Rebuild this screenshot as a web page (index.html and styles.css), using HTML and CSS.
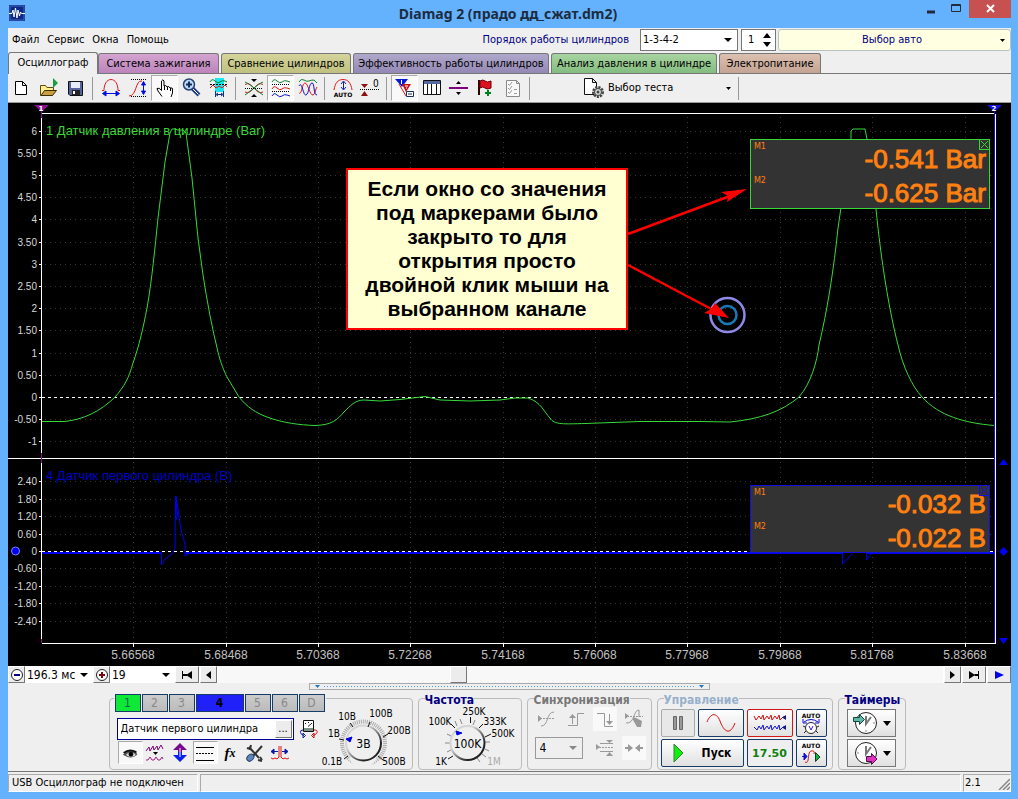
FILE: index.html
```html
<!DOCTYPE html>
<html lang="ru">
<head>
<meta charset="utf-8">
<title>Diamag 2 (прадо дд_сжат.dm2)</title>
<meta name="viewport" content="width=device-width, initial-scale=1">
<link rel="stylesheet" href="styles.css">
</head>
<body>
<header class="titlebar">
  <svg class="app-icon" viewBox="0 0 16 16" width="16" height="16"><rect width="16" height="16" fill="#0b2a8a"/><rect x="1" y="1" width="14" height="14" fill="none" stroke="#4767c0"/><path d="M0 8.500H3L4 5L5 12L6.500 3L8 13L9 5L10.500 11L11.500 7L12.500 8.500H16" fill="none" stroke="#fff"/></svg>
  <h1 class="title">Diamag 2 (прадо дд_сжат.dm2)</h1>
  <div class="window-buttons">
    <button class="win-btn" aria-label="Свернуть"><svg viewBox="0 0 16 16" width="16" height="16"><path d="M3 11H11" stroke="#222b38" stroke-width="3"/></svg></button>
    <button class="win-btn" aria-label="Развернуть"><svg viewBox="0 0 16 16" width="16" height="16"><path d="M2.500 3.500H11.500V10.500H2.500ZM2 4.500H12" fill="none" stroke="#222b38"/></svg></button>
    <button class="win-btn win-close" aria-label="Закрыть"><svg viewBox="0 0 16 16" width="16" height="16"><path d="M5 4L12 11M12 4L5 11" stroke="#fff" stroke-width="2"/></svg></button>
  </div>
</header>
<main class="client">
  <div class="menurow">
    <nav class="menu">
      <button>Файл</button><button>Сервис</button><button>Окна</button><button>Помощь</button>
    </nav>
    <label class="order-label" for="order">Порядок работы цилиндров</label>
    <select id="order" class="order"><option>1-3-4-2</option></select>
    <div class="spinner">
      <input class="spin-input" aria-label="Цилиндр" value="1">
      <span class="spin-arrows"><button aria-label="Больше"><svg viewBox="0 0 8 5" width="8" height="5"><path d="M0 5L4 0L8 5Z"/></svg></button><button aria-label="Меньше"><svg viewBox="0 0 8 5" width="8" height="5"><path d="M0 0L4 5L8 0Z"/></svg></button></span>
    </div>
    <button class="car"><span>Выбор авто</span><svg viewBox="0 0 5 3" width="5" height="3"><path d="M0 0H5L2.500 3Z"/></svg></button>
  </div>
  <div class="tabs" role="tablist">
    <button class="tab tab-active" role="tab">Осциллограф</button>
    <button class="tab tab-pink" role="tab">Система зажигания</button>
    <button class="tab tab-olive" role="tab">Сравнение цилиндров</button>
    <button class="tab tab-violet" role="tab">Эффективность работы цилиндров</button>
    <button class="tab tab-green" role="tab">Анализ давления в цилиндре</button>
    <button class="tab tab-brown" role="tab">Электропитание</button>
  </div>
  <div class="toolbar">
    <button class="tool" aria-label="Новый"><svg viewBox="0 0 20 20" width="20" height="20"><path d="M3.500 3.500H10.500L14.500 7.500V16.500H3.500ZM10.500 3.500V7.500H14.500" fill="#fff" stroke="#000"/></svg></button>
    <button class="tool" aria-label="Открыть"><svg viewBox="0 0 20 20" width="20" height="20"><path d="M1.500 17.500V7.500H6.500L8 9.500H14.500V12.500L13.500 17.500Z" fill="#ffef90" stroke="#5a4a10"/><path d="M2 17.500L5.500 12.500H17.500L13.500 17.500Z" fill="#c9a040" stroke="#3c2c00"/><path d="M14 0V10L19 5Z" fill="#1aa03c"/></svg></button>
    <button class="tool" aria-label="Сохранить"><svg viewBox="0 0 20 20" width="20" height="20"><path d="M2.500 3.500H16.500V17.500H4L2.500 16Z" fill="#56639c" stroke="#111"/><rect x="5" y="4" width="9" height="6" fill="#e8ecf4"/><rect x="6" y="12" width="8" height="5" fill="#222"/><rect x="7" y="13" width="2" height="3" fill="#fff"/></svg></button>
    <span class="sep"></span>
    <button class="tool" aria-label="Развёртка"><svg viewBox="0 0 20 20" width="20" height="20"><path d="M1 12.500H3C3 6 6 1.500 10 1.500S17 6 17 12.500H19" fill="none" stroke="#e01818"/><path d="M3 15.500H17M5 13V18L1.500 15.500ZM15 13V18L18.500 15.500Z" fill="#0010e0" stroke="#0010e0"/></svg></button>
    <button class="tool" aria-label="Амплитуда"><svg viewBox="0 0 20 20" width="20" height="20"><path d="M1 18C9 18 7 2 14 3" fill="none" stroke="#e01818"/><path d="M3 1.500H19M3 18.500H19" stroke="#000" stroke-dasharray="1 1"/><path d="M15.500 4V16M13.500 7L15.500 3.500L17.500 7ZM13.500 13L15.500 16.500L17.500 13Z" fill="#0010e0" stroke="#0010e0"/></svg></button>
    <button class="tool pressed" aria-label="Рука"><svg viewBox="0 0 20 20" width="20" height="20"><path d="M7 18.500L3 13L2 10.500Q4 9 6.500 12.500V3Q8 .500 9 3V8Q11 6.500 12 9Q14 7.500 15 10Q18 9 17.500 12V15L16 19" fill="#fff" stroke="#000"/><path d="M9.500 8V12M12.500 9V12M15.500 10V13" stroke="#000"/></svg></button>
    <button class="tool" aria-label="Лупа"><svg viewBox="0 0 20 20" width="20" height="20"><path d="M10 10L17 17" stroke="#223e80" stroke-width="4"/><path d="M11 11L16.500 16.500" stroke="#fff"/><circle cx="7" cy="6.500" r="5.500" fill="#b8dcff" stroke="#28406c" stroke-width="1.500"/><path d="M4 6.500H10M7 3.500V9.500" stroke="#142850" stroke-width="2"/></svg></button>
    <button class="tool" aria-label="Участок"><svg viewBox="0 0 20 20" width="20" height="20"><rect x="6" y="0" width="9" height="14" fill="#18e8f0"/><path d="M1 4Q3 0 6 3T11 4T16 3L18 4" fill="none" stroke="#088030"/><path d="M1 10L4 7L7 10L10 8L13 10L16 7L18 9" fill="none" stroke="#e01818"/><path d="M1 6.500H19" stroke="#000" stroke-dasharray="2 1"/><path d="M6.500 13V19M14.500 13V19M8 16.500H13M9 15L7 16.500L9 18M12 15L14 16.500L12 18" fill="none" stroke="#123080"/></svg></button>
    <span class="sep"></span>
    <button class="tool" aria-label="Наложение"><svg viewBox="0 0 20 20" width="20" height="20"><path d="M1 6.500C8 2 12 18 19 14M1 14C8 18 12 2 19 6.500" fill="none" stroke="#e01818"/><path d="M1 4L5 6L10 10L15 6L19 4M1 17L5 14L10 10L15 14L19 17" fill="none" stroke="#108030"/><path d="M1 10.500H19" stroke="#000" stroke-dasharray="1 1"/><path d="M7 1H13L10 4ZM7 19H13L10 16Z"/></svg></button>
    <button class="tool pressed" aria-label="Каналы отдельно"><svg viewBox="0 0 20 20" width="20" height="20"><g fill="none"><path d="M1 4Q3 0 6 3T11 4T16 3L19 4" stroke="#108030"/><path d="M1 11Q3 7 6 10T11 11T16 10L19 11" stroke="#e01818"/><path d="M1 18Q3 14 6 17T11 18T16 17L19 18" stroke="#1010d0"/><path d="M1 6.500H19M1 13.500H19" stroke="#000" stroke-dasharray="1 1"/></g></svg></button>
    <button class="tool" aria-label="Каналы вместе"><svg viewBox="0 0 20 20" width="20" height="20"><g fill="none"><path d="M1 4Q3 0 6 2T11 3T16 2L19 5" stroke="#108030"/><path d="M1 15C4 17 4 5 7 5S12 18 15 17S17 11 19 9" stroke="#e01818"/><path d="M1 8C4 2 5 18 8 17S11 5 14 5S15 17 19 17" stroke="#1010d0"/></g></svg></button>
    <span class="sep"></span>
    <button class="tool" aria-label="Авто"><svg viewBox="0 0 24 20" width="24" height="20"><path d="M3 12C4 5 7 1.500 12 1.500S20 5 21 12" fill="none" stroke="#e01818"/><path d="M12.500 4V11M10 6L12.500 3L15 6M10 9L12.500 12L15 9" fill="none" stroke="#1020b0"/><text class="auto" x="12" y="19">AUTO</text></svg></button>
    <button class="tool" aria-label="Ноль"><svg viewBox="0 0 20 20" width="20" height="20"><path d="M1 6H8L4.500 10ZM1 18H8L4.500 13Z" fill="#8c1010"/><path d="M0 11.500H19" stroke="#000" stroke-dasharray="1 1"/><text x="13" y="9" font-size="10">0</text></svg></button>
    <span class="sep"></span>
    <button class="tool pressed" aria-label="Маркеры"><svg viewBox="0 0 20 20" width="20" height="20"><path d="M0 1H13L7 9Z" fill="#0818d8"/><path d="M6.500 2V6" stroke="#fff"/><path d="M7 6H16L11 14Z" fill="#c81018"/><path d="M4 6L11 18M12 8V11" stroke="#e01818"/><path d="M10 8H13M11 10H12" stroke="#fff"/><path d="M11.500 13.500H18.500V18.500H11.500Z" fill="#fff" stroke="#1c3060"/><path d="M13 16H17" stroke="#1c3060"/></svg></button>
    <button class="tool" aria-label="Таблица"><svg viewBox="0 0 20 20" width="20" height="20"><path d="M1.500 2.500H18.500V16.500H1.500ZM5.500 6V16M9.500 6V16M14.500 6V16" fill="#fff" stroke="#111"/><path d="M2 4.500H18" stroke="#5568a0" stroke-width="3"/></svg></button>
    <button class="tool" aria-label="Линия"><svg viewBox="0 0 20 20" width="20" height="20"><path d="M0 10H19" stroke="#800080" stroke-width="2"/><path d="M7 6H12L9.500 3ZM7 14H12L9.500 17Z"/></svg></button>
    <button class="tool" aria-label="Флажок"><svg viewBox="0 0 20 20" width="20" height="20"><path d="M3 2V17" stroke="#300" stroke-width="2"/><path d="M4 3Q7 1 9 3T15 3V10Q11 12 9 10T4 10Z" fill="#e01020" stroke="#600"/><path d="M9 15H15M12 12V18" stroke="#008020" stroke-width="2"/></svg></button>
    <button class="tool" aria-label="Список"><svg viewBox="0 0 20 20" width="20" height="20"><path d="M3.500 2.500H13.500L16.500 5.500V18.500H3.500ZM13.500 2.500V5.500H16.500" fill="#f8f8f8" stroke="#888"/><path d="M5 6L6.500 7.500L9 4M5 10L6.500 11.500L9 8M5 14L6.500 15.500L9 12M11 15.500H14M11 11.500H14" fill="none" stroke="#999"/></svg></button>
    <span class="sep"></span>
    <button class="test-select"><svg viewBox="0 0 20 20" width="20" height="20"><path d="M.500 .500H8.500L12.500 4.500V16.500H.500ZM8.500 .500V4.500H12.500" fill="#fff" stroke="#111"/><circle cx="14" cy="14" r="4.500" fill="#d8e0dc" stroke="#444" stroke-width="3" stroke-dasharray="2 1"/><circle cx="14" cy="14" r="3.500" fill="#d8e0dc" stroke="#444"/><circle cx="14" cy="14" r="1.500" fill="#444"/></svg><span>Выбор теста</span><svg class="drop" viewBox="0 0 5 3" width="5" height="3"><path d="M0 0H5L2.500 3Z"/></svg></button>
    <span class="sep"></span>
  </div>
  <section class="scope" aria-label="Осциллограмма">
    <svg class="plot" viewBox="8 103 1003 563">
      <g class="grid">
        <path d="M45 131.500H994M45 153.500H994M45 175.500H994M45 197.500H994M45 219.500H994M45 242.500H994M45 264.500H994M45 286.500H994M45 308.500H994M45 330.500H994M45 353.500H994M45 375.500H994M45 419.500H994M45 441.500H994"/>
        <path d="M45 481.500H994M45 499.500H994M45 516.500H994M45 534.500H994M45 568.500H994M45 586.500H994M45 603.500H994M45 621.500H994"/>
        <path d="M133.500 117V643M226.500 117V643M318.500 117V643M410.500 117V643M503.500 117V643M595.500 117V643M687.500 117V643M780.500 117V643M872.500 117V643M965.500 117V643"/>
      </g>
      <path class="trace-blue base" d="M42 553H161M185 553H842M866 553H994"/>
      <path class="trace-blue" d="M161.500 553V565L165 559L173 553L175 548L175.500 496L177.500 515L176 520V496L181 530L185 544V556L190 553M842.500 553V564L852 554M866.500 553V560L872 553"/>
      <g class="axis">
        <path d="M41.500 113.500H994M8 458.500H995M41.500 643.500H996M41.500 118V643"/>
        <path d="M39 131.500H42M39 153.500H42M39 175.500H42M39 197.500H42M39 219.500H42M39 242.500H42M39 264.500H42M39 286.500H42M39 308.500H42M39 330.500H42M39 353.500H42M39 375.500H42M39 397.500H42M39 419.500H42M39 441.500H42M39 481.500H42M39 499.500H42M39 516.500H42M39 534.500H42M39 551.500H42M39 568.500H42M39 586.500H42M39 603.500H42M39 621.500H42"/>
        <path d="M133.500 643V647M226.500 643V647M318.500 643V647M410.500 643V647M503.500 643V647M595.500 643V647M687.500 643V647M780.500 643V647M872.500 643V647M965.500 643V647"/>
        <path class="zero" d="M42 397.500H994M42 551.500H994"/>
      </g>
      <path class="trace-green" d="M42 421.500H64C83 420 101 411 115 397C124 387 129 378 133 363C139 346 143 329 147 308C152 280 155 247 158 218L165 162L170 133L172 129H175L178 130H183L186 133L192 178L198 238L203 275C207 301 212 328 218 352C221 364 224 371 227 377L239 397C247 407 256 413 267 417C283 423 300 425 315 425.500C332 425 337 420 344 412C350 406 355 400 364 400L380 401L400 399.500L425 396.500L440 400L470 401L500 400L515 398L528 398C541 402 544 412 550 418C554 425 564 424 585 423.500L640 421.500L700 421.500L730 422C760 419 781 412 799 397C811 383 817 362 819 345C827 312 834 268 838 228L851 139V131L853 129H865L867 139L876 209C881 260 889 310 898 345C903 367 912 386 922 397C939 416 965 423 994 425.500"/>
      <g class="ylabels">
        <text x="37" y="135">6</text><text x="37" y="157">5.50</text><text x="37" y="179">5</text><text x="37" y="201">4.50</text><text x="37" y="223">4</text><text x="37" y="246">3.50</text><text x="37" y="268">3</text><text x="37" y="290">2.50</text><text x="37" y="312">2</text><text x="37" y="334">1.50</text><text x="37" y="357">1</text><text x="37" y="379">0.50</text><text x="37" y="401">0</text><text x="37" y="423">-0.50</text><text x="37" y="445">-1</text>
        <text x="37" y="485">2.40</text><text x="37" y="503">1.80</text><text x="37" y="520">1.20</text><text x="37" y="538">0.60</text><text x="37" y="555">0</text><text x="37" y="572">-0.60</text><text x="37" y="590">-1.20</text><text x="37" y="607">-1.80</text><text x="37" y="625">-2.40</text>
      </g>
      <g class="xlabels">
        <text x="133" y="659">5.66568</text><text x="226" y="659">5.68468</text><text x="318" y="659">5.70368</text><text x="410" y="659">5.72268</text><text x="503" y="659">5.74168</text><text x="595" y="659">5.76068</text><text x="687" y="659">5.77968</text><text x="780" y="659">5.79868</text><text x="872" y="659">5.81768</text><text x="965" y="659">5.83668</text>
      </g>
      <text class="name-green" x="46" y="135">1 Датчик давления в цилиндре (Bar)</text>
      <text class="name-blue" x="46" y="480">4 Датчик первого цилиндра (В)</text>
      <path d="M34 105H49L41.500 112ZM41 112H42V118H41ZM41 453H42V463H41ZM41 639H42V643H41Z" fill="#8a1090"/>
      <path d="M987 105H1002L994.500 112Z" fill="#1010e0"/>
      <text class="marker" x="41" y="111">1</text><text class="marker" x="994" y="111">2</text>
      <path d="M994.500 112V643" stroke="#1010e0"/><path d="M995.500 114V643" stroke="#fff"/>
      <circle cx="15.500" cy="551" r="4" fill="#0000f0" stroke="#8080ff"/>
      <path d="M999 465L1003.500 459L1008 465ZM999 638L1003.500 644L1008 638ZM999 551.500L1003.500 547L1008 551.500L1003.500 556Z" fill="#0000f0"/>
      <circle cx="727.500" cy="315" r="17" fill="none" stroke="#8f8ae8" stroke-width="2.500"/><circle cx="727.500" cy="315" r="9" fill="none" stroke="#187ab8" stroke-width="2.500"/>
      <path d="M628 234L730 196M628 265L713 310" stroke="#f00" stroke-width="2.500"/>
      <path d="M747 189L727 202L728 196L721 192ZM729 318L704 313L711 309L715 303Z" fill="#f00"/>
    </svg>
    <div class="callout">Если окно со значения<br>под маркерами было<br>закрыто то для<br>открытия просто<br>двойной клик мыши на<br>выбранном канале</div>
    <div class="readout readout-green">
      <div class="reading"><small>M1</small><output>-0.541 Bar</output></div>
      <div class="reading"><small>M2</small><output>-0.625 Bar</output></div>
      <button class="readout-close" aria-label="Закрыть"><svg viewBox="0 0 9 9" width="9" height="9"><path d="M1 1L8 8M8 1L1 8" stroke="currentColor"/></svg></button>
    </div>
    <div class="readout readout-blue">
      <div class="reading"><small>M1</small><output>-0.032 В</output></div>
      <div class="reading"><small>M2</small><output>-0.022 В</output></div>
      <button class="readout-close" aria-label="Закрыть"><svg viewBox="0 0 9 9" width="9" height="9"><path d="M1 1L8 8M8 1L1 8" stroke="currentColor"/></svg></button>
    </div>
  </section>
  <div class="timebar">
    <button class="raised" aria-label="Уменьшить"><svg viewBox="0 0 14 14" width="14" height="14"><circle cx="7" cy="7" r="5.500" fill="#fff" stroke="#222"/><path d="M4 7H10" stroke="#000080" stroke-width="2"/></svg></button>
    <select class="span-select" aria-label="Развёртка"><option>196.3 мс</option></select>
    <button class="raised" aria-label="Увеличить"><svg viewBox="0 0 14 14" width="14" height="14"><circle cx="7" cy="7" r="5.500" fill="#fff" stroke="#222"/><path d="M4 7H10M7 4V10" stroke="#800010" stroke-width="2"/></svg></button>
    <select class="zoom-select" aria-label="Масштаб"><option>19</option></select>
    <button class="raised wide" aria-label="В начало"><svg viewBox="0 0 12 8" width="12" height="8"><path d="M1 0H2V8H1ZM11 0V8L5 4ZM2 3H6V5H2Z"/></svg></button>
    <button class="raised" aria-label="Назад"><svg viewBox="0 0 5 8" width="5" height="8"><path d="M5 0V8L0 4Z"/></svg></button>
    <div class="track"><span class="thumb"></span></div>
    <button class="raised" aria-label="Вперёд"><svg viewBox="0 0 5 8" width="5" height="8"><path d="M0 0V8L5 4Z"/></svg></button>
    <button class="raised wide" aria-label="В конец"><svg viewBox="0 0 12 8" width="12" height="8"><path d="M10 0H11V8H10ZM1 0V8L7 4ZM6 3H10V5H6Z"/></svg></button>
    <button class="raised wide" aria-label="Воспроизвести"><svg viewBox="0 0 9 8" width="9" height="8"><path d="M0 0V8L9 4Z" fill="#0000f0"/></svg></button>
  </div>
  <div class="splitter"><svg viewBox="0 0 5 3" width="5" height="3"><path d="M0 0H5L2.500 3Z"/></svg><i></i><svg viewBox="0 0 5 3" width="5" height="3"><path d="M0 0H5L2.500 3Z"/></svg></div>
  <div class="panels">
    <section class="group channel-group">
      <div class="channel-left">
        <div class="channels"><button class="ch ch-green">1</button><button class="ch">2</button><button class="ch">3</button><button class="ch ch-blue">4</button><button class="ch">5</button><button class="ch">6</button><button class="ch">D</button></div>
        <div class="sensor-row">
          <div class="sensor"><input aria-label="Датчик" value="Датчик первого цилиндра"><button class="raised" aria-label="Выбрать датчик">...</button></div>
          <button class="flat" aria-label="Прибор"><svg viewBox="0 0 20 22" width="20" height="22"><path d="M4.500 2.500H14.500V13.500H4.500Z" fill="#fff" stroke="#111"/><path d="M5 10H14V13H5Z" fill="#7a9080"/><path d="M6 5.500H7M9 4.500H10M12 5.500H13M9 8.500L12 6" fill="none" stroke="#222"/><path d="M4 12Q1 12 1.500 14.500T5 17.500M4 15L6.500 17.500L4 20Z" fill="none" stroke="#0818a0"/><path d="M15 12Q19 12 18 14.500T14 17.500M15 15L12.500 17.500L15 20Z" fill="none" stroke="#d81010"/></svg></button>
        </div>
        <div class="channel-tools">
          <button class="tool pressed" aria-label="Показать"><svg viewBox="0 0 20 20" width="18" height="18"><path d="M3 11Q9 5 17 9L18 12Q12 17 6 14L2 12Z" fill="#555"/><ellipse cx="11" cy="12" rx="5" ry="2" fill="#ddd"/><circle cx="11" cy="11.500" r="2.500"/><path d="M3 10Q9 5 17 9" fill="none" stroke="#111" stroke-width="2"/></svg></button>
          <button class="tool" aria-label="Фильтр"><svg viewBox="0 0 20 20" width="20" height="20"><path d="M1 8L4 4L5 8L8 3L9 7L12 3L13 7L16 2L18 6" fill="none" stroke="#800080"/><path d="M8 9H13L10.500 12Z"/><path d="M1 17H3L5 14L7 17H9L11 14L13 17H15L17 14L18 16" fill="none" stroke="#a02080"/></svg></button>
          <button class="tool" aria-label="Сдвиг"><svg viewBox="0 0 20 20" width="20" height="20"><path d="M10 0L17 7H12V9H8V7H3Z" fill="#780890"/><path d="M10 19L17 12H12V9H8V12H3Z" fill="#0820f0"/><path d="M10 5V14" stroke="#fff"/></svg></button>
          <button class="tool pressed" aria-label="Линии"><svg viewBox="0 0 20 20" width="20" height="20"><path d="M1 4.500H19M1 17.500H19" stroke="#000"/><path d="M1 10.500H19" stroke="#000" stroke-dasharray="2 1"/></svg></button>
          <button class="tool fx" aria-label="Функция">f<small>x</small></button>
          <button class="tool" aria-label="Настройки"><svg viewBox="0 0 20 20" width="20" height="20"><path d="M4 4L14 15" stroke="#333" stroke-width="2"/><path d="M17 3L8 13" stroke="#333" stroke-width="2"/><path d="M2 5L5 6L6 2M13 17L17 18M15 14L17 17" fill="none" stroke="#333" stroke-width="2"/><ellipse cx="5.500" cy="15" rx="4" ry="3" transform="rotate(-45 5 15)" fill="#5f86b8" stroke="#29456c"/></svg></button>
          <button class="tool" aria-label="Синхроимпульс"><svg viewBox="0 0 20 20" width="20" height="20"><path d="M1 15L3 16L5 15L7 16L9 14V3M11 3V14L13 16L15 15L17 16L19 15" fill="none" stroke="#e01010"/><path d="M4 6V11L1 8.500ZM15 6V11L18 8.500ZM4 8.500H8M12 8.500H15" fill="#0818a0" stroke="#0818a0"/></svg></button>
        </div>
      </div>
      <svg class="dial" viewBox="320 702 92 68" width="92" height="68">
        <defs><linearGradient id="rim" x1="0" y1="0" x2="1" y2="1"><stop offset=".35" stop-color="#d4d4d4"/><stop offset=".75" stop-color="#222"/></linearGradient></defs>
        <circle cx="363.500" cy="743" r="21.500" fill="none" stroke="#aaa" stroke-width="4" stroke-dasharray="1 1"/><path d="M349 759L363 746L377 759L369 768H356Z" fill="#efefef"/>
        <circle cx="363.500" cy="743" r="17.500" fill="#efefef" stroke="url(#rim)" stroke-width="2"/>
        <path d="M344 759L348 756M339 739L344 740M350 723L353 727M370 722L368 727M388 734L383 737M378 756L383 760" stroke="#111"/>
        <path d="M346 739L352 737L350 742Z" fill="#0000e0" stroke="#0000e0"/>
        <text x="363.500" y="748" class="dial-value">3В</text>
        <text x="347" y="720">10В</text><text x="381" y="717">100В</text><text x="334" y="737">1В</text><text x="399" y="734">200В</text><text x="332" y="765">0.1В</text><text x="394" y="765">500В</text>
      </svg>
    </section>
    <section class="group freq-group">
      <h2>Частота</h2>
      <svg class="dial" viewBox="424 706 94 62" width="94" height="62">
        <path d="M445 743H450M447 752L451 750M447 734L451 736M455 721L457 726M460 719L462 724M475 720L473 725M490 742H485M489 751L485 749M480 762L477 758M486 757L482 754" stroke="#888"/>
        <circle cx="467.500" cy="743" r="17" fill="#efefef" stroke="url(#rim)" stroke-width="2"/>
        <path d="M448 759L453 756M451 724L455 728M470.500 717V723M483 724L479 728M491 734L485 737" stroke="#111"/>
        <path d="M456 731L462 733L457 735Z" fill="#0000e0" stroke="#0000e0"/>
        <text x="467.500" y="748" class="dial-value">100K</text>
        <text x="474" y="715">250K</text><text x="440" y="725">100K</text><text x="495" y="725">333K</text><text x="503" y="737">500K</text><text x="441" y="765">1K</text><text x="494" y="765" fill="#aaa">1M</text>
      </svg>
    </section>
    <section class="group sync-group">
      <h2>Синхронизация</h2>
      <div class="sync-row">
        <button class="tool" aria-label="Уровень"><svg viewBox="0 0 20 20" width="20" height="20"><path d="M1 6V13L5 9.500Z" fill="#999"/><path d="M3 9.500H18" stroke="#999" stroke-dasharray="2 1"/><path d="M4 17C12 17 9 3 17 3" fill="none" stroke="#999"/></svg></button>
        <button class="tool" aria-label="Фронт"><svg viewBox="0 0 20 20" width="20" height="20"><path d="M2 16.500H11.500V4.500H18M6.500 15V6" fill="none" stroke="#999"/><path d="M3 9L6.500 5L10 9Z" fill="#999"/></svg></button>
        <button class="tool checked" aria-label="Спад"><svg viewBox="0 0 20 20" width="20" height="20"><path d="M2 4.500H9.500V17.500H18M14.500 5V15" fill="none" stroke="#999"/><path d="M11 12H18L14.500 16Z" fill="#999"/></svg></button>
        <button class="tool" aria-label="Вручную"><svg viewBox="0 0 20 20" width="20" height="20"><path d="M1 4V10L5 7ZM9 8L12 9L18 12L17 18H13L9 11Z" fill="#999"/><path d="M3 7.500H19" stroke="#999" stroke-dasharray="2 1"/><path d="M2 14C11 15 9 1 15 1V8" fill="none" stroke="#999"/></svg></button>
      </div>
      <div class="sync-row sync-low">
        <select class="sync-select" aria-label="Канал синхронизации"><option>4</option></select>
        <button class="tool" aria-label="Порог"><svg viewBox="0 0 20 20" width="20" height="20"><path d="M1 6V12L5 9ZM11 2H18L14.500 5ZM11 18H18L14.500 14Z" fill="#999"/><path d="M5 5.500H18M5 13.500H18" stroke="#999"/><path d="M4 9.500H18" stroke="#999" stroke-dasharray="2 1"/></svg></button>
        <button class="tool checked" aria-label="Центр"><svg viewBox="0 0 20 20" width="20" height="20"><path d="M1 9H4V6L9 10L4 14V11H1ZM19 9H16V6L11 10L16 14V11H19Z" fill="#999"/></svg></button>
      </div>
    </section>
    <section class="group control-group">
      <h2>Управление</h2>
      <div class="controls">
        <button class="ctl ctl-off" aria-label="Пауза"><svg viewBox="0 0 12 16" width="12" height="16"><path d="M1.500 1.500H4.500V14.500H1.500ZM7.500 1.500H10.500V14.500H7.500Z" fill="#999" stroke="#666"/></svg></button>
        <button class="ctl sine" aria-label="Синусоида"><svg viewBox="0 0 30 22" width="30" height="22"><path d="M1 10C4 2 10 -1 14 9C18 20 24 24 29 11" fill="none" stroke="#d01010"/></svg></button>
        <button class="ctl ctl-red" aria-label="Несколько кадров"><svg viewBox="0 0 34 20" width="34" height="20"><path d="M1 3L3 7L6 3L8 6L10 2L11 7L14 3L16 6L18 2L19 7L22 3L24 6L26 2L27 7L30 4H33" fill="none" stroke="#d01010"/><path d="M1 14L4 17L6 13L8 16L10 12L11 17L14 13L16 16L18 12L19 17L22 13L24 16L26 12L27 17L30 14H33" fill="none" stroke="#1010d0"/><path d="M33 2V7L29 4.500ZM33 12V17L29 14.500Z" fill="#102080"/></svg></button>
        <button class="ctl" aria-label="Авто напряжение"><svg viewBox="0 0 24 24" width="24" height="24"><text class="auto" x="12" y="7">AUTO</text><circle cx="12" cy="17" r="5.500" fill="#fff" stroke="#222"/><path d="M10 15L12 19L14 15" fill="none" stroke="#4010d0"/><path d="M5 11Q12 6 19 11M4 8V12H8M20 8V12H16" fill="none" stroke="#1010d0"/><path d="M6 16L4 15M18 16L20 15M5 22L7 20M19 22L17 20" stroke="#222"/></svg></button>
        <button class="ctl start"><svg viewBox="0 0 11 20" width="11" height="20"><path d="M1 1V19L10 10Z" fill="#10f010" stroke="#388038"/></svg><span>Пуск</span></button>
        <button class="ctl ctl-value">17.50</button>
        <button class="ctl" aria-label="Авто запуск"><svg viewBox="0 0 24 24" width="24" height="24"><text class="auto" x="12" y="7">AUTO</text><path d="M6 21C11 24 8 11 12 10Q16 9 15 13" fill="none" stroke="#d01010"/><path d="M3 15.500H6M5 12V19L8 15.500Z" fill="#1010d0" stroke="#1010d0"/><path d="M16.500 11.500V20.500L21 16Z" fill="#10b040" stroke="#104020"/></svg></button>
      </div>
    </section>
    <section class="group timer-group">
      <h2>Таймеры</h2>
      <button class="timer" aria-label="Таймер начала"><svg viewBox="0 0 26 24" width="26" height="24"><circle cx="14" cy="12" r="10.500" fill="#fff" stroke="#222"/><path d="M14 5V13L19 6" fill="none" stroke="#777" stroke-width="2"/><path d="M14 19V21M21 12H23" stroke="#888"/><path d="M1.500 6.500H7.500V3.500L12.500 8.500L7.500 13.500V10.500H1.500Z" fill="#60b8a8" stroke="#104840"/></svg><svg class="drop" viewBox="0 0 8 5" width="8" height="5"><path d="M0 0H8L4 5Z"/></svg></button>
      <button class="timer" aria-label="Таймер окончания"><svg viewBox="0 0 26 24" width="26" height="24"><circle cx="14" cy="12" r="10.500" fill="#fff" stroke="#222"/><path d="M14 5V13L19 6" fill="none" stroke="#777" stroke-width="2"/><path d="M5 12H7" stroke="#888"/><path d="M14.500 15.500H19.500V12.500L25 18L19.500 23.500V20.500H14.500Z" fill="#e030c0" stroke="#501048"/></svg><svg class="drop" viewBox="0 0 8 5" width="8" height="5"><path d="M0 0H8L4 5Z"/></svg></button>
    </section>
  </div>
  <footer class="status"><span class="cell cell-left">USB Осциллограф не подключен</span><span class="cell cell-mid"></span><span class="cell cell-right">2.1<svg viewBox="0 0 12 12" width="12" height="12"><path d="M1 12L12 1M5 12L12 5M9 12L12 9" stroke="#888" stroke-width="1.500"/></svg></span></footer>
</main>
</body>
</html>
```
FILE: styles.css
```css
* { box-sizing: border-box; }
html, body { height: 100%; }
body {
  margin: 0;
  display: flex;
  flex-direction: column;
  background: #64b2fe;
  color: #000;
  font: 11px/14px "DejaVu Sans Condensed", "Noto Sans", sans-serif;
}
button, input, select { font: inherit; color: inherit; margin: 0; padding: 0; border: 0; border-radius: 0; background: none; }
button { display: flex; align-items: center; justify-content: center; }
h1, h2 { margin: 0; }
svg { display: block; flex: none; }

/* Title bar */
.titlebar { flex: none; height: 28px; display: flex; align-items: flex-start; padding: 0 7px 0 9px; }
.app-icon { margin-top: 5px; }
.title { flex: 1; padding-left: 72px; text-align: center; font: bold 14px/27px "Noto Sans", sans-serif; color: #1c2c40; }
.window-buttons { display: flex; }
.win-btn { width: 25px; height: 18px; }
.win-close { width: 42px; background: #c75050; }

.client {
  flex: 1;
  min-height: 0;
  display: flex;
  flex-direction: column;
  margin: 0 7px 7px 8px;
  background: #efefef;
}

/* Menu row */
.menurow { flex: none; height: 24px; display: flex; align-items: center; }
.menu { display: flex; gap: 8px; padding-left: 4px; flex: 1; }
.order-label { color: #000080; margin-right: 11px; }
select { appearance: none; background: #fff url("data:image/svg+xml,%3Csvg xmlns='http://www.w3.org/2000/svg' width='8' height='4'%3E%3Cpath d='M0 0H8L4 4Z'/%3E%3C/svg%3E") no-repeat right 5px center; }
.order { width: 98px; height: 22px; border: 1px solid #777; padding-left: 2px; }
.spinner { display: flex; width: 35px; height: 22px; margin: 0 2px 0 3px; border: 1px solid #777; background: #fff; }
.spin-input { flex: 1; min-width: 0; padding-left: 6px; }
.spin-arrows { width: 16px; display: flex; flex-direction: column; justify-content: center; gap: 4px; }
.car { width: 233px; height: 22px; border: 1px solid #b8c4c4; border-radius: 3px; background: #ffffe1; color: #000080; padding: 0 5px; }
.car span { flex: 1; }

/* Tabs */
.tabs { flex: none; height: 22px; display: flex; align-items: flex-end; gap: 2px; border-bottom: 1px solid #777; }
.tab { height: 20px; border: 1px solid #777; border-bottom: 0; border-radius: 3px 3px 0 0; white-space: nowrap; }
.tab-active { height: 22px; width: 90px; margin: 0 -2px -1px 0; background: #efefef; padding-bottom: 1px; }
.tab-pink { width: 121px; background: linear-gradient(#d4a4d0, #bc84bc); }
.tab-olive { width: 130px; background: linear-gradient(#d4d49c, #c0c080); }
.tab-violet { width: 196px; background: linear-gradient(#b0a8cc, #9488b4); }
.tab-green { width: 166px; background: linear-gradient(#a8d4a0, #84bc80); }
.tab-brown { width: 102px; background: linear-gradient(#dcc0b0, #c4a494); }

/* Toolbar */
.toolbar { flex: none; height: 29px; display: flex; align-items: center; border-bottom: 1px solid #999; }
.tool { width: 27px; height: 26px; }
.pressed { border: 1px solid #aaa; border-right-color: #fff; border-bottom-color: #fff; background: #f9f9f9; }
.checked { background: #f9f9f9; }
.sep { width: 1px; height: 23px; margin: 0 4px 0 3px; background: #999; }
.auto { font: bold 6px "DejaVu Sans", sans-serif; text-anchor: middle; }
.test-select { width: 201px; height: 26px; padding: 0 4px 0 50px; gap: 4px; }
.test-select span { flex: 1; text-align: left; }

/* Oscilloscope */
.scope { flex: 1; min-height: 0; position: relative; background: #000; }
.plot { width: 100%; height: 100%; }
.grid path { fill: none; stroke: #38382a; stroke-dasharray: 1 4; shape-rendering: crispEdges; }
.axis path { fill: none; stroke: #fff; shape-rendering: crispEdges; }
.axis .zero { stroke-dasharray: 3 3; }
.trace-green { fill: none; stroke: #38d838; }
.trace-blue { fill: none; stroke: #0000f0; }
.base { stroke-width: 2; }
.ylabels { font: 10px "Liberation Sans", sans-serif; fill: #d8d8d8; text-anchor: end; }
.xlabels { font: 12px "Liberation Sans", sans-serif; fill: #c0c0c0; text-anchor: middle; }
.name-green { font: 13px "Liberation Sans", sans-serif; fill: #38d838; }
.name-blue { font: 13px "Liberation Sans", sans-serif; fill: #0000c8; }
.marker { font: bold 7px "DejaVu Sans", sans-serif; fill: #fff; text-anchor: middle; }
.callout {
  position: absolute;
  left: 33.7%;
  top: 11.6%;
  padding: 7px 14px;
  width: 282px;
  border: 2px solid #f00;
  background: #ffffd2;
  text-align: center;
  white-space: nowrap;
  font: bold 21px/24px "Liberation Sans", sans-serif;
}
.readout { position: absolute; right: 2.1%; width: 240px; height: 70px; border: 1px solid #38d838; background: #333; color: #ff8010; padding: 2px 3px 0 3px; }
.readout-green { top: 6.4%; }
.readout-blue { top: 67.8%; height: 68px; border-color: #1010e0; }
.reading { display: flex; justify-content: space-between; height: 34px; }
.reading small { font: 8px/10px "DejaVu Sans", sans-serif; }
.reading output { font: 26px/34px "Liberation Sans", sans-serif; -webkit-text-stroke: 1px #ff8010; }
.readout-blue output { line-height: 32px; }
.readout-close { position: absolute; top: -1px; right: -1px; width: 11px; height: 11px; border: 1px solid; color: #38d838; }
.readout-blue .readout-close { color: #1010e0; }

/* Time bar */
.timebar { flex: none; height: 17px; display: flex; background: #fff; gap: 1px; }
.raised { width: 17px; border: 1px solid #fff; border-right-color: #777; border-bottom-color: #777; background: #ececec; }
.wide { width: 24px; }
.span-select, .zoom-select { background-position: right 4px center; font-size: 12px; }
.span-select { width: 66px; padding-left: 1px; }
.zoom-select { width: 63px; padding-left: 1px; }
.track { flex: 1; background: #f8f8f8; }
.thumb { display: block; margin-left: 32%; width: 17px; height: 17px; border: 1px solid #fff; border-right-color: #777; border-bottom-color: #777; background: #ececec; }
.splitter { flex: none; align-self: center; width: 40%; height: 7px; border: 1px solid #aaa; display: flex; align-items: center; padding: 0 5px; gap: 4px; fill: #1878c8; }
.splitter i { flex: 1; height: 1px; background: repeating-linear-gradient(90deg, #4898e0 0 1px, transparent 1px 3px); }

/* Control panels */
.panels { flex: none; height: 81px; display: flex; justify-content: center; gap: 5px; padding: 8px 5px 0 0; }
.group { height: 72px; border: 1px solid #bbb; border-radius: 4px; }
.group h2 { width: max-content; height: 14px; margin: -6px 0 0 6px; background: #efefef; color: #000080; font: bold 12px/14px "DejaVu Sans Condensed", sans-serif; }
.channel-group { width: 304px; display: flex; }
.channel-left { width: 210px; margin-top: -5px; }
.channels { display: flex; gap: 1px; margin-left: 4px; padding: 0 1px; width: max-content; background: #efefef; }
.ch { width: 26px; height: 18px; border: 1px solid #183c68; background: linear-gradient(#ccc, #bbb); color: #888; font-size: 12px; }
.ch-green { background: #10e838; color: #064; }
.ch-blue { width: 48px; background: #2020f8; color: #000; font-weight: bold; }
.sensor-row { display: flex; align-items: center; gap: 5px; margin: 6px 0 0 7px; }
.sensor { display: flex; width: 177px; height: 22px; border: 1px solid #0000a0; background: #fff; padding: 1px; }
.sensor input { flex: 1; min-width: 0; padding-left: 2px; }
.flat { width: 20px; height: 22px; }
.channel-tools { display: flex; margin: 1px 0 0 8px; }
.channel-tools .tool { width: 25px; height: 23px; }
.channel-tools .fx { font: italic bold 15px/20px "Liberation Serif", serif; }
.fx small { font-size: 12px; }
.dial { font: 10px "DejaVu Sans Condensed", sans-serif; text-anchor: middle; }
.channel-group .dial { margin-top: 3px; }
.dial-value { font-size: 12px; }
.freq-group { width: 104px; }
.freq-group .dial { margin: -1px 0 0 5px; }
.sync-group { width: 125px; }
.sync-group h2 { color: #777; }
.sync-row { display: flex; align-items: center; padding-left: 7px; gap: 5px; }
.sync-row .tool { width: 24px; height: 24px; }
.sync-low { margin-top: 5px; }
.sync-select { width: 48px; height: 22px; border: 1px solid #999; padding-left: 4px; margin-right: 5px; background-color: #efefef; background-image: url("data:image/svg+xml,%3Csvg xmlns='http://www.w3.org/2000/svg' width='8' height='4'%3E%3Cpath d='M0 0H8L4 4Z' fill='%23888'/%3E%3C/svg%3E"); font-size: 12px; }
.control-group { width: 176px; }
.control-group h2 { color: #98b0cc; }
.controls { display: grid; grid-template-columns: 34px 46px 46px 31px; grid-auto-rows: 28px; gap: 2px 3px; margin: 2px 0 0 3px; }
.ctl { border: 1px solid #183c68; border-radius: 2px; background: linear-gradient(#fff, #e0e0e0); }
.ctl-off { border-color: #aaa; background: #e8e8e8; }
.ctl-red { border-color: #d01818; }
.start { grid-column: span 2; gap: 18px; font: bold 12px "DejaVu Sans Condensed", sans-serif; }
.ctl-value { background: #efefef; color: #108010; font: bold 11px "DejaVu Sans", sans-serif; }
.timer-group { width: 68px; }
.timer { width: 49px; height: 28px; margin: 2px 0 0 8px; border: 1px solid #777; background: linear-gradient(#fff, #e0e0e0); gap: 5px; }

/* Status bar */
.status { flex: none; height: 21px; display: flex; gap: 2px; border-top: 1px solid #777; padding-top: 2px; }
.cell { border: 1px solid #aaa; border-right-color: #fff; border-bottom-color: #fff; padding: 1px 3px; white-space: nowrap; }
.cell-left { width: 190px; }
.cell-mid { flex: 1; }
.cell-right { width: 48px; display: flex; justify-content: space-between; align-items: flex-end; padding: 0 0 1px 1px; }
```
